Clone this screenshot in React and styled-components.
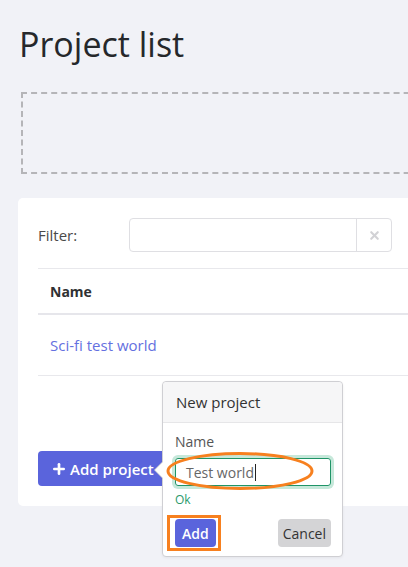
import styled, { createGlobalStyle } from "styled-components";
import { Plus, X } from "lucide-react";

const GlobalStyle = createGlobalStyle`
  html {
    overflow: hidden;
    background: #f1f2f7;
  }
  body {
    margin: 0;
    font-family: "Open Sans", "Noto Sans", sans-serif;
    color: #212529;
  }
  * { box-sizing: border-box; }
`;

const Page = styled.div`
  width: 460px;
  min-height: 567px;
  padding: 20px 0 40px 18px;
`;

const Title = styled.h1`
  margin: 0 0 0 1px;
  font-size: 34px;
  font-weight: 400;
  line-height: 48px;
  color: #25282b;
`;

const DropZone = styled.div`
  margin: 24px 0 0 3px;
  height: 82px;
  border: 2px dashed #b5b5b8;
`;

const Card = styled.section`
  margin-top: 24px;
  background: #fff;
  border-radius: 5px;
  padding: 20px 0 20px 20px;
`;

const FilterRow = styled.div`
  display: flex;
  align-items: center;
  padding-bottom: 16px;
  border-bottom: 1px solid #e8e8ec;
`;

const Label = styled.label`
  width: 91px;
  font-size: 15px;
  color: #4a4a4a;
`;

const InputGroup = styled.div`
  display: flex;
  width: 263px;
  height: 34px;
  border: 1px solid #dfdfe3;
  border-radius: 4px;
`;

const FilterInput = styled.input`
  flex: 1;
  min-width: 0;
  border: none;
  background: transparent;
  outline: none;
`;

const ClearButton = styled.button`
  width: 35px;
  border: none;
  border-left: 1px solid #dfdfe3;
  background: transparent;
  display: flex;
  align-items: center;
  justify-content: center;
  color: #d2d2d5;
  padding: 0;
`;

const Table = styled.table`
  width: 100%;
  border-collapse: collapse;
`;

const HeadCell = styled.th`
  text-align: left;
  padding: 13px 12px 12px;
  font-size: 14px;
  font-weight: 700;
  color: #2f3133;
  border-bottom: 2px solid #e6e6eb;
`;

const Cell = styled.td`
  padding: 20px 12px 20px;
  font-size: 15px;
  border-bottom: 1px solid #e8e8ec;
`;

const ProjectLink = styled.a`
  color: #6470e0;
  text-decoration: none;
`;

const Footer = styled.div`
  margin-top: 75px;
  position: relative;
  display: flex;
`;

const PrimaryButton = styled.button`
  display: inline-flex;
  align-items: center;
  gap: 3px;
  height: ${(p) => (p.$small ? "28px" : "35px")};
  padding: ${(p) => (p.$small ? "0 7px" : "0 12px 0 13px")};
  border: none;
  border-radius: 4px;
  background: #5a64dc;
  color: #fff;
  font-family: inherit;
  font-size: ${(p) => (p.$small ? "14px" : "15px")};
  font-weight: 600;
`;

const SecondaryButton = styled.button`
  height: 28px;
  padding: 0 5px;
  border: none;
  border-radius: 4px;
  background: #d4d4d6;
  color: #333;
  font-family: inherit;
  font-size: 14px;
`;

const Popover = styled.div`
  position: absolute;
  left: 124px;
  top: -70px;
  width: 181px;
  background: #fff;
  border: 1px solid #cfcfd3;
  border-radius: 4px;
  box-shadow: 0 1px 3px rgba(0, 0, 0, 0.06);

  &::before,
  &::after {
    content: "";
    position: absolute;
    top: 79px;
    border-style: solid;
    border-color: transparent;
  }
  &::before {
    left: -9px;
    border-width: 9px 9px 9px 0;
    border-right-color: #cfcfd3;
  }
  &::after {
    left: -8px;
    top: 80px;
    border-width: 8px 8px 8px 0;
    border-right-color: #fff;
  }
`;

const PopoverHeader = styled.div`
  height: 41px;
  display: flex;
  align-items: center;
  padding: 0 13px;
  background: #f6f6f7;
  border-bottom: 1px solid #e6e6e8;
  border-radius: 4px 4px 0 0;
  font-size: 15px;
  font-weight: 500;
  color: #333;
`;

const PopoverBody = styled.div`
  position: relative;
  padding: 9px 11px 9px 12px;
`;

const FieldLabel = styled.div`
  font-size: 14px;
  color: #555;
  margin-bottom: 7px;
`;

const NameInput = styled.div`
  height: 28px;
  display: flex;
  align-items: center;
  padding: 0 10px;
  border: 1px solid #1f9467;
  border-radius: 3px;
  box-shadow: 0 0 0 3px #c6e8da;
  font-size: 14px;
  color: #666;
`;

const Caret = styled.span`
  display: inline-block;
  width: 1px;
  height: 17px;
  background: #222;
  margin-left: 1px;
`;

const Hint = styled.div`
  margin-top: 5px;
  font-size: 12px;
  color: #2a9a6c;
`;

const Actions = styled.div`
  position: relative;
  display: flex;
  justify-content: space-between;
  margin-top: 11px;
`;

const BoxMark = styled.span`
  position: absolute;
  left: -8px;
  top: -4px;
  width: 54px;
  height: 36px;
  border: 3px solid #f7801f;
  pointer-events: none;
`;

const EllipseMark = styled.svg`
  position: absolute;
  left: 3px;
  top: 29px;
  overflow: visible;
  pointer-events: none;
`;

export default function App() {
  return (
    <>
      <GlobalStyle />
      <Page>
        <Title>Project list</Title>
        <DropZone />
        <Card>
          <FilterRow>
            <Label>Filter:</Label>
            <InputGroup>
              <FilterInput />
              <ClearButton>
                <X size={13} strokeWidth={4} />
              </ClearButton>
            </InputGroup>
          </FilterRow>
          <Table>
            <thead>
              <tr>
                <HeadCell>Name</HeadCell>
              </tr>
            </thead>
            <tbody>
              <tr>
                <Cell>
                  <ProjectLink href="#">Sci-fi test world</ProjectLink>
                </Cell>
              </tr>
            </tbody>
          </Table>
          <Footer>
            <PrimaryButton>
              <Plus size={16} strokeWidth={4} />
              Add project
            </PrimaryButton>
            <Popover>
              <PopoverHeader>New project</PopoverHeader>
              <PopoverBody>
                <FieldLabel>Name</FieldLabel>
                <NameInput>
                  Test world
                  <Caret />
                </NameInput>
                <Hint>Ok</Hint>
                <Actions>
                  <PrimaryButton $small>Add</PrimaryButton>
                  <SecondaryButton>Cancel</SecondaryButton>
                  <BoxMark />
                </Actions>
                <EllipseMark width="150" height="38">
                  <ellipse
                    cx="74"
                    cy="19"
                    rx="72"
                    ry="17.5"
                    fill="none"
                    stroke="#f7801f"
                    strokeWidth="3"
                  />
                </EllipseMark>
              </PopoverBody>
            </Popover>
          </Footer>
        </Card>
      </Page>
    </>
  );
}
